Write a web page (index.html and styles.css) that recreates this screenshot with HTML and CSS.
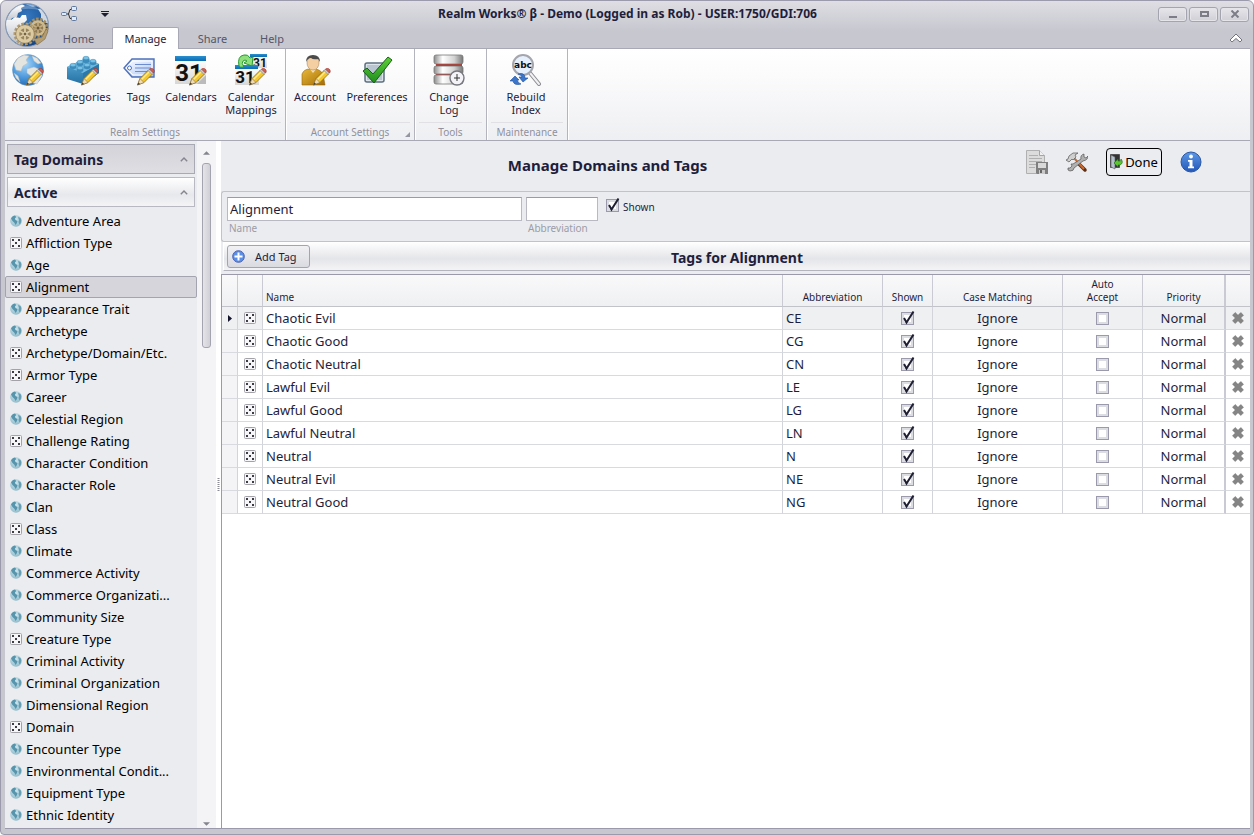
FILE: index.html
```html
<!DOCTYPE html>
<html lang="en">
<head>
    <meta charset="UTF-8">
    <meta name="viewport" content="width=device-width, initial-scale=1.0">
    <title>Realm Works</title>
    <link rel="stylesheet" href="styles.css">
</head>
<body>
    <svg class="sprites" aria-hidden="true">
        <defs>
            <radialGradient id="g-sea" cx="40%" cy="30%" r="75%">
                <stop offset="0" stop-color="#a9d8fa"/>
                <stop offset="0.6" stop-color="#4a97dc"/>
                <stop offset="1" stop-color="#2467ae"/>
            </radialGradient>
            <radialGradient id="g-orb" cx="50%" cy="30%" r="80%">
                <stop offset="0" stop-color="#3577bd"/>
                <stop offset="0.6" stop-color="#1d559b"/>
                <stop offset="1" stop-color="#123a74"/>
            </radialGradient>
            <linearGradient id="g-land" x1="0" y1="0" x2="0" y2="1">
                <stop offset="0" stop-color="#ffffff"/>
                <stop offset="1" stop-color="#b4bac4"/>
            </linearGradient>
            <radialGradient id="g-globe" cx="45%" cy="35%" r="70%">
                <stop offset="0" stop-color="#d4e8ef"/>
                <stop offset="1" stop-color="#8ab8c8"/>
            </radialGradient>
            <linearGradient id="g-brick" x1="0" y1="0" x2="0" y2="1">
                <stop offset="0" stop-color="#5cadd8"/>
                <stop offset="1" stop-color="#2471a4"/>
            </linearGradient>
            <linearGradient id="g-tag" x1="0" y1="0" x2="1" y2="1">
                <stop offset="0" stop-color="#ffffff"/>
                <stop offset="1" stop-color="#a9c4f6"/>
            </linearGradient>
            <linearGradient id="g-cal" x1="0" y1="0" x2="0" y2="1">
                <stop offset="0" stop-color="#2a8fd0"/>
                <stop offset="1" stop-color="#0c6cb0"/>
            </linearGradient>
            <linearGradient id="g-page" x1="0" y1="0" x2="0" y2="1">
                <stop offset="0" stop-color="#ffffff"/>
                <stop offset="1" stop-color="#d6d6d6"/>
            </linearGradient>
            <linearGradient id="g-gold" x1="0" y1="0" x2="1" y2="1">
                <stop offset="0" stop-color="#e8b93c"/>
                <stop offset="1" stop-color="#a56c05"/>
            </linearGradient>
            <linearGradient id="g-green" x1="0" y1="0" x2="0" y2="1">
                <stop offset="0" stop-color="#5fce3a"/>
                <stop offset="1" stop-color="#1f8d1c"/>
            </linearGradient>
            <linearGradient id="g-metal" x1="0" y1="0" x2="1" y2="0">
                <stop offset="0" stop-color="#8c8c8c"/>
                <stop offset="0.3" stop-color="#ffffff"/>
                <stop offset="0.7" stop-color="#d2d2d2"/>
                <stop offset="1" stop-color="#777777"/>
            </linearGradient>
            <linearGradient id="g-info" x1="0" y1="0" x2="0" y2="1">
                <stop offset="0" stop-color="#5d98e6"/>
                <stop offset="1" stop-color="#2257b8"/>
            </linearGradient>
            <clipPath id="orb-clip"><circle cx="22" cy="22" r="21"/></clipPath>
        </defs>

        <symbol id="pencil" viewBox="0 0 18 18">
            <path d="M1 17l2.500-6.500L12 2l4 4-8.500 8.500z" fill="#f3c52f" stroke="#8b6a12" stroke-width="0.800"/>
            <path d="M5 11.500l8-8" stroke="#fdeb8c" stroke-width="1.500"/>
            <path d="M1 17l2.500-6.500 4 4z" fill="#f0dcb4" stroke="#8b7040" stroke-width="0.600"/>
            <path d="M1 17l1-2.500 1.500 1.500z" fill="#333"/>
            <path d="M11.500 2.500l1.500-1.500 4 4L15.500 6.500z" fill="#c9ccd2" stroke="#777" stroke-width="0.500"/>
            <path d="M13 1C14 0 15.500 0 16.800 1.200s1.200 2.800.2 3.800z" fill="#dc5a4b" stroke="#96352b" stroke-width="0.600"/>
        </symbol>
        <symbol id="dice" viewBox="0 0 12 12">
            <rect x="0.500" y="0.500" width="11" height="11" rx="1" fill="#f6f6f8" stroke="#a2a2a8"/>
            <path d="M2 2h2v2H2zM8 2h2v2H8zM5 5h2v2H5zM2 8h2v2H2zM8 8h2v2H8z" fill="#3c3c42"/>
        </symbol>
        <symbol id="globe" viewBox="0 0 12 12">
            <circle cx="6" cy="6" r="5.800" fill="url(#g-globe)"/>
            <path d="M1 3.500C2 1.500 3.500.8 5 .6L6.200 2 5 3.500 5.500 5 7.500 6 7 8 5.500 10 4.500 8 2.500 6z" fill="#5795ac"/>
            <path d="M8 2l2.500 1L11.300 5l-.5 3-1.300 1.500L8.500 7 9 5z" fill="#639eb3"/>
        </symbol>
        <symbol id="cross" viewBox="0 0 12 12">
            <path d="M3.200.5L6 3.300 8.800.5l2.700 2.700L8.700 6l2.800 2.800-2.700 2.700L6 8.700l-2.800 2.800L.5 8.800 3.300 6 .5 3.200z" fill="#858585" stroke="#707070" stroke-width="0.500"/>
        </symbol>
        <symbol id="up" viewBox="0 0 8 5">
            <path d="M.8 4.300L4 1l3.200 3.300" fill="none" stroke="#85858f" stroke-width="1.400"/>
        </symbol>
    </svg>

    <div class="window">
        <header class="titlebar">
            <button class="orb" aria-label="Application menu">
                <svg width="44" height="44" viewBox="0 0 44 44">
                    <circle cx="22" cy="22" r="21.500" fill="url(#g-orb)" stroke="#8d9db5"/>
                    <g clip-path="url(#orb-clip)">
                        <path d="M0 16C3 8 9 3 17 1l3 2-4 2 1 3-4 2-1 4-5 1-3 5-4 2z" fill="url(#g-land)"/>
                        <path d="M0 17l6 0 4-3 5 1 2-3 4 0 1 5-3 3-1 4-5 2-1 8 4 5-1 5H0z" fill="url(#g-land)"/>
                        <path d="M33 6l5-1 5 8 1 8-5-2-3-4 0-4z" fill="#cfd9e6"/>
                        <path d="M20 1l4-1 8 3-4 1z" fill="#8db3dc"/>
                        <path d="M6 9Q20-4 37 8 22 3 6 9z" fill="#fff" opacity="0.250"/>
                    </g>
                    <g fill="none">
                        <circle cx="33" cy="25" r="8.500" stroke="#a38b5e" stroke-width="4" stroke-dasharray="2.400 1.400"/>
                        <circle cx="33" cy="25" r="6.500" fill="#8f7b58" stroke="#d0bb8f" stroke-width="2.500"/>
                        <path d="M33 19v12M27.500 22l11 6M27.500 28l11-6" stroke="#c4ae80" stroke-width="1.600"/>
                        <path d="M29 36l8-2 4-8 2 2-3 8-8 6z" fill="#b39c70" stroke="#7d6a48" stroke-width="0.600"/>
                        <circle cx="20" cy="31" r="9.500" stroke="#b09a6f" stroke-width="4" stroke-dasharray="2.600 1.500"/>
                        <circle cx="20" cy="31" r="7.500" fill="#98855f" stroke="#dccaa2" stroke-width="3.500"/>
                        <path d="M20 24v14M14 27.500l12 7M14 34.500l12-7" stroke="#dccaa2" stroke-width="1.800"/>
                        <circle cx="20" cy="31" r="2" fill="#75623f" stroke="#e8dab8"/>
                        <circle cx="33" cy="25" r="1.500" fill="#6c5937"/>
                        <circle cx="20" cy="31" r="9.300" stroke="#75623f" stroke-width="0.500"/>
                    </g>
                </svg>
            </button>
            <div class="quick">
                <button aria-label="Relationships">
                    <svg width="16" height="16" viewBox="0 0 16 16">
                        <path d="M5 8h3M11 3.500H9L7.500 8 9 12.500h2" fill="none" stroke="#333"/>
                        <g fill="#dfeafa" stroke="#5f789e">
                            <rect x="0.500" y="6.500" width="5" height="3" rx="1"/>
                            <rect x="10.500" y="0.500" width="5" height="4" rx="1"/>
                            <rect x="10.500" y="10.500" width="5" height="4" rx="1"/>
                        </g>
                    </svg>
                </button>
                <button aria-label="Customize toolbar">
                    <svg width="8" height="6" viewBox="0 0 8 6"><path d="M0 0h8v1H0zM0 2h8L4 6z" fill="#1e1e32"/></svg>
                </button>
            </div>
            <h1>Realm Works® β - Demo (Logged in as Rob) - USER:1750/GDI:706</h1>
            <div class="window-buttons">
                <button aria-label="Minimize"><svg width="10" height="8" viewBox="0 0 10 8"><path d="M1 6h8v2H1z" fill="#7d7d88"/></svg></button>
                <button aria-label="Maximize"><svg width="10" height="8" viewBox="0 0 10 8"><rect x="2" y="2" width="7" height="4" fill="none" stroke="#7d7d88" stroke-width="2"/></svg></button>
                <button aria-label="Close"><svg width="10" height="8" viewBox="0 0 10 8"><path d="M1.500.5l7 7M8.500.5l-7 7" stroke="#7d7d88" stroke-width="2"/></svg></button>
            </div>
        </header>

        <nav class="tabs">
            <a href="#">Home</a>
            <a href="#" class="active">Manage</a>
            <a href="#">Share</a>
            <a href="#" class="narrow">Help</a>
            <button class="collapse" aria-label="Collapse ribbon">
                <svg width="14" height="10" viewBox="0 0 14 10"><path d="M1 7l6-6 6 6-2 2-4-3.500L3 9z" fill="#fff" stroke="#74747e"/></svg>
            </button>
        </nav>

        <section class="ribbon">
            <div class="group">
                <div class="tools">
                    <button>
                        <svg width="32" height="32" viewBox="0 0 32 32">
                            <circle cx="16" cy="16" r="15.500" fill="url(#g-sea)" stroke="#6d92b8" stroke-width="0.500"/>
                            <path d="M2 10L6 4l6-3 5 1-3 4 2 3-5 3-2 5-5-1zM20 2l5 2 4 5-3 1-4-3zM15 15l7-2 7 3 1 6-5 8-4-1-2-7-4-3zM2 19l4 3 2 6-4-4z" fill="#e4e4e0" stroke="#b9bcbb" stroke-width="0.500"/>
                            <use href="#pencil" x="13" y="14" width="19" height="18"/>
                        </svg>
                        Realm
                    </button>
                    <button class="wide">
                        <svg width="32" height="32" viewBox="0 0 32 32">
                            <path d="M0 13l19-9 13 6v9L16 30 0 25z" fill="url(#g-brick)"/>
                            <path d="M0 13l19-9 13 6-16 9z" fill="#6fb9df"/>
                            <path d="M16 19l16-9v9L16 30z" fill="#2b78ab"/>
                            <g fill="#79c2e6" stroke="#3a86b5" stroke-width="0.500">
                                <path d="M3 11v3q3 2 6 0v-3zM10 14v3q3 2 6 0v-3zM10 8v3q3 2 6 0V8zM17 11v3q3 2 6 0v-3zM16 4v4q3 2 6 0V4zM23 7v3q3 2 6 0V7z" fill="#3a8cbd"/>
                                <ellipse cx="6" cy="11" rx="3" ry="1.700"/><ellipse cx="13" cy="14" rx="3" ry="1.700"/>
                                <ellipse cx="13" cy="8" rx="3" ry="1.700"/><ellipse cx="20" cy="11" rx="3" ry="1.700"/>
                                <ellipse cx="19" cy="4" rx="3" ry="1.700"/><ellipse cx="26" cy="7" rx="3" ry="1.700"/>
                            </g>
                            <use href="#pencil" x="13" y="14" width="19" height="18"/>
                        </svg>
                        Categories
                    </button>
                    <button>
                        <svg width="32" height="32" viewBox="0 0 32 32">
                            <path d="M1 14l8-9h22v18H9z" fill="url(#g-tag)" stroke="#4d70ba" stroke-width="1.400"/>
                            <path d="M3 14l7-7h19v14H10z" fill="none" stroke="#fff"/>
                            <circle cx="6.500" cy="14" r="2" fill="#fff" stroke="#4d70ba"/>
                            <path d="M12 10.500h16M12 14h16M12 17.500h13" stroke="#6b8cd0" stroke-width="1.200"/>
                            <use href="#pencil" x="13" y="14" width="19" height="18"/>
                        </svg>
                        Tags
                    </button>
                    <button class="mid">
                        <svg width="32" height="32" viewBox="0 0 32 32">
                            <rect x="0" y="5" width="31" height="25" fill="url(#g-page)"/>
                            <rect x="0" y="2" width="31" height="5" fill="url(#g-cal)"/>
                            <text x="14" y="27" text-anchor="middle" class="cal-day">31</text>
                            <path d="M22 30l9-9v9z" fill="#bbb"/>
                            <use href="#pencil" x="13" y="14" width="19" height="18"/>
                        </svg>
                        Calendars
                    </button>
                    <button class="mid">
                        <svg width="32" height="32" viewBox="0 0 32 32">
                            <rect x="15" y="2" width="17" height="12" fill="url(#g-page)"/>
                            <rect x="15" y="0" width="17" height="3" fill="url(#g-cal)"/>
                            <text x="25" y="13" text-anchor="middle" class="cal-day small">31</text>
                            <rect x="0" y="14" width="24" height="17" fill="url(#g-page)"/>
                            <rect x="0" y="11" width="23" height="4" fill="url(#g-cal)"/>
                            <text x="10" y="29" text-anchor="middle" class="cal-day medium">31</text>
                            <path d="M4 12Q2 2 9 1q4-1 6 3l3-1-1 9-8-3 3-2Q10 5 8 7t1 6q-4 1-5-1z" fill="#8fe07c" stroke="#279a30"/>
                            <use href="#pencil" x="13" y="14" width="19" height="18"/>
                        </svg>
                        Calendar Mappings
                    </button>
                </div>
                <div class="caption">Realm Settings</div>
            </div>
            <div class="group">
                <div class="tools">
                    <button class="account">
                        <svg width="32" height="32" viewBox="0 0 32 32">
                            <path d="M3 31V20q2-5 8-5h4q6 0 9 5l2 11z" fill="url(#g-gold)" stroke="#96670d" stroke-width="0.600"/>
                            <path d="M10 14l4 5 4-5z" fill="#f6dfb8"/>
                            <ellipse cx="14" cy="9" rx="6" ry="7" fill="#f3cfa2" stroke="#a3794a" stroke-width="0.500"/>
                            <path d="M7 8Q7 1 14 1t7 7l-2-3q-5 1-7-1-3 0-5 4z" fill="#4b4b4b"/>
                            <use href="#pencil" x="13" y="14" width="19" height="18"/>
                        </svg>
                        Account
                    </button>
                    <button class="wide">
                        <svg width="32" height="32" viewBox="0 0 32 32">
                            <rect x="4" y="9" width="19" height="19" rx="2" fill="#dce3ea" stroke="#5d7082" stroke-width="1.500"/>
                            <rect x="6" y="11" width="15" height="15" fill="#b9c6d2"/>
                            <path d="M2 17l4-3 6 6L27 3l4 3-18 23z" fill="url(#g-green)" stroke="#185e17" stroke-linejoin="round"/>
                        </svg>
                        Preferences
                    </button>
                </div>
                <div class="caption">Account Settings
                    <svg class="launcher" width="5" height="5" viewBox="0 0 5 5"><path d="M5 0v5H0z" fill="#9696a0"/></svg>
                </div>
            </div>
            <div class="group">
                <div class="tools">
                    <button class="mid">
                        <svg width="32" height="32" viewBox="0 0 32 32">
                            <rect x="3" y="8" width="26" height="14" fill="#c6271f"/>
                            <g fill="url(#g-metal)" stroke="#777" stroke-width="0.800">
                                <rect x="1" y="1" width="29" height="9" rx="2"/>
                                <rect x="1" y="12" width="29" height="8" rx="2"/>
                                <rect x="1" y="21" width="29" height="9" rx="2"/>
                            </g>
                            <circle cx="24" cy="24" r="7" fill="#f4f4f8" stroke="#77777f" stroke-width="1.400"/>
                            <path d="M24 20v7M21 24h6" stroke="#333"/>
                        </svg>
                        Change Log
                    </button>
                </div>
                <div class="caption">Tools</div>
            </div>
            <div class="group">
                <div class="tools">
                    <button class="mid">
                        <svg width="32" height="32" viewBox="0 0 32 32">
                            <path d="M20 19l9 11" stroke="#8b8b90" stroke-width="4" stroke-linecap="round"/>
                            <path d="M20 19l9 11" stroke="#f1f1f4" stroke-width="2" stroke-linecap="round"/>
                            <circle cx="13" cy="11" r="10" fill="#e6f0fc" stroke="#a5a5ad" stroke-width="2"/>
                            <text x="13" y="14" text-anchor="middle" class="abc">abc</text>
                            <path d="M0 27l5-5 4 4H7q1 3 4 4-7 2-8-3zM18 24l-5 4-4-5h3q-1-3-4-3 7-2 7 4z" fill="#3b76ca" stroke="#1c4f9e" stroke-width="0.600"/>
                        </svg>
                        Rebuild Index
                    </button>
                </div>
                <div class="caption">Maintenance</div>
            </div>
        </section>

        <div class="content">
            <aside class="sidebar">
                <div class="domains">
                    <button class="section dark">Tag Domains <svg width="8" height="5"><use href="#up"/></svg></button>
                    <button class="section">Active <svg width="8" height="5"><use href="#up"/></svg></button>
                    <ul>
                        <li><a href="#"><svg><use href="#globe"/></svg>Adventure Area</a></li>
                        <li><a href="#"><svg><use href="#dice"/></svg>Affliction Type</a></li>
                        <li><a href="#"><svg><use href="#globe"/></svg>Age</a></li>
                        <li><a href="#" class="selected"><svg><use href="#dice"/></svg>Alignment</a></li>
                        <li><a href="#"><svg><use href="#globe"/></svg>Appearance Trait</a></li>
                        <li><a href="#"><svg><use href="#globe"/></svg>Archetype</a></li>
                        <li><a href="#"><svg><use href="#dice"/></svg>Archetype/Domain/Etc.</a></li>
                        <li><a href="#"><svg><use href="#dice"/></svg>Armor Type</a></li>
                        <li><a href="#"><svg><use href="#globe"/></svg>Career</a></li>
                        <li><a href="#"><svg><use href="#globe"/></svg>Celestial Region</a></li>
                        <li><a href="#"><svg><use href="#dice"/></svg>Challenge Rating</a></li>
                        <li><a href="#"><svg><use href="#globe"/></svg>Character Condition</a></li>
                        <li><a href="#"><svg><use href="#globe"/></svg>Character Role</a></li>
                        <li><a href="#"><svg><use href="#globe"/></svg>Clan</a></li>
                        <li><a href="#"><svg><use href="#dice"/></svg>Class</a></li>
                        <li><a href="#"><svg><use href="#globe"/></svg>Climate</a></li>
                        <li><a href="#"><svg><use href="#globe"/></svg>Commerce Activity</a></li>
                        <li><a href="#"><svg><use href="#globe"/></svg>Commerce Organizati...</a></li>
                        <li><a href="#"><svg><use href="#globe"/></svg>Community Size</a></li>
                        <li><a href="#"><svg><use href="#dice"/></svg>Creature Type</a></li>
                        <li><a href="#"><svg><use href="#globe"/></svg>Criminal Activity</a></li>
                        <li><a href="#"><svg><use href="#globe"/></svg>Criminal Organization</a></li>
                        <li><a href="#"><svg><use href="#globe"/></svg>Dimensional Region</a></li>
                        <li><a href="#"><svg><use href="#dice"/></svg>Domain</a></li>
                        <li><a href="#"><svg><use href="#globe"/></svg>Encounter Type</a></li>
                        <li><a href="#"><svg><use href="#globe"/></svg>Environmental Condit...</a></li>
                        <li><a href="#"><svg><use href="#globe"/></svg>Equipment Type</a></li>
                        <li><a href="#"><svg><use href="#globe"/></svg>Ethnic Identity</a></li>
                    </ul>
                </div>
                <div class="scrollbar">
                    <svg width="7" height="4" viewBox="0 0 8 4"><path d="M0 4l4-4 4 4z" fill="#85858f"/></svg>
                    <div class="thumb"></div>
                    <svg width="7" height="4" viewBox="0 0 8 4"><path d="M0 0l4 4 4-4z" fill="#85858f"/></svg>
                </div>
            </aside>
            <div class="splitter"><svg width="3" height="14" viewBox="0 0 3 14"><path d="M1.500 0v14" stroke="#8c8c96" stroke-dasharray="1 1" stroke-width="2"/></svg></div>

            <main>
                <div class="page-head">
                    <h2>Manage Domains and Tags</h2>
                    <div class="actions">
                        <button aria-label="Save">
                            <svg width="22" height="24" viewBox="0 0 22 24">
                                <path d="M.5.5h13l5 5v18H.5z" fill="#dcdcdc" stroke="#b0b0b0"/>
                                <path d="M13.500.5v5h5" fill="#f1f1f1" stroke="#a5a5a5"/>
                                <path d="M3 5.500h9M3 8.500h13M3 11.500h13M3 14.500h7M3 17.500h6" stroke="#b0b0b0"/>
                                <path d="M10 12h12v12H11l-1-1z" fill="#7f7f7f"/>
                                <path d="M12 13h8v5h-8z" fill="#d9d9d9"/><path d="M13 20h6v4h-6z" fill="#c9c9c9"/><path d="M14 20h2v3h-2z" fill="#666"/>
                            </svg>
                        </button>
                        <button aria-label="Tools">
                            <svg width="22" height="22" viewBox="0 0 22 22">
                                <path d="M12 12l7 7" stroke="#5f2d14" stroke-width="3.500" stroke-linecap="round"/>
                                <path d="M8 7l10 11" stroke="#c96a30" stroke-width="2"/>
                                <path d="M4 20l-2-1 0-2 2 0 2-2-1-2 2 0L15 8q-1-4 3-5l0 3 2 1 2-2q0 4-5 5L8 17q0 3-4 3z" fill="#b0b0b0" stroke="#555" stroke-width="0.700"/>
                                <path d="M0 9l2-1 1-3 4-3 5 0-3 2 1 2-3 3-1-1-3 3z" fill="#cfcfcf" stroke="#555" stroke-width="0.700"/>
                            </svg>
                        </button>
                        <button class="done">
                            <svg width="13" height="16" viewBox="0 0 13 16">
                                <path d="M.5.500h9v13h-9z" fill="#333" stroke="#555"/>
                                <path d="M1 1l4 2v12l-4-2z" fill="#b3c0cc" stroke="#555" stroke-width="0.600"/>
                                <path d="M4 9l4-4v2h2q1 0 1-2 3 4-1 6H8v2z" fill="#5cc52f" stroke="#227711" stroke-width="0.700"/>
                            </svg>
                            Done
                        </button>
                        <button aria-label="Information">
                            <svg width="22" height="22" viewBox="0 0 22 22">
                                <circle cx="11" cy="11" r="10" fill="url(#g-info)" stroke="#2a57a5"/>
                                <circle cx="11" cy="5.500" r="1.900" fill="#fff"/>
                                <path d="M8 9h4.500v6.500H14v1.800H8v-1.800h1.500v-4.700H8z" fill="#fff"/>
                            </svg>
                        </button>
                    </div>
                </div>

                <form class="fields">
                    <div class="field">
                        <input type="text" id="name" value="Alignment">
                        <label for="name">Name</label>
                    </div>
                    <div class="field abbr">
                        <input type="text" id="abbr">
                        <label for="abbr">Abbreviation</label>
                    </div>
                    <label class="shown"><input type="checkbox" checked>Shown</label>
                </form>

                <div class="bar">
                    <button class="add">
                        <svg width="13" height="13" viewBox="0 0 13 13">
                            <circle cx="6.500" cy="6.500" r="5.800" fill="#5c8fe8" stroke="#4a5fae"/>
                            <path d="M5.500 2.500h2v3h3v2h-3v3h-2v-3h-3v-2h3z" fill="#fff"/>
                        </svg>
                        Add Tag
                    </button>
                    <h3>Tags for Alignment</h3>
                </div>

                <div class="grid">
                    <table>
                        <colgroup>
                            <col class="c-mark"><col class="c-icon"><col><col class="c-abbr"><col class="c-shown"><col class="c-case"><col class="c-auto"><col class="c-prio"><col class="c-del">
                        </colgroup>
                        <thead>
                            <tr><th></th><th></th><th class="left">Name</th><th>Abbreviation</th><th>Shown</th><th>Case Matching</th><th>Auto<br>Accept</th><th>Priority</th><th></th></tr>
                        </thead>
                        <tbody>
                            <tr class="current">
                                <td><svg class="marker" width="4" height="7" viewBox="0 0 4 7"><path d="M0 0l4 3.500L0 7z" fill="#14142a"/></svg></td>
                                <td><svg><use href="#dice"/></svg></td>
                                <td class="left">Chaotic Evil</td><td class="left">CE</td>
                                <td><input type="checkbox" aria-label="Shown" checked></td><td>Ignore</td>
                                <td><input type="checkbox" aria-label="Auto accept"></td><td>Normal</td>
                                <td><button aria-label="Delete"><svg><use href="#cross"/></svg></button></td>
                            </tr>
                            <tr>
                                <td></td>
                                <td><svg><use href="#dice"/></svg></td>
                                <td class="left">Chaotic Good</td><td class="left">CG</td>
                                <td><input type="checkbox" aria-label="Shown" checked></td><td>Ignore</td>
                                <td><input type="checkbox" aria-label="Auto accept"></td><td>Normal</td>
                                <td><button aria-label="Delete"><svg><use href="#cross"/></svg></button></td>
                            </tr>
                            <tr>
                                <td></td>
                                <td><svg><use href="#dice"/></svg></td>
                                <td class="left">Chaotic Neutral</td><td class="left">CN</td>
                                <td><input type="checkbox" aria-label="Shown" checked></td><td>Ignore</td>
                                <td><input type="checkbox" aria-label="Auto accept"></td><td>Normal</td>
                                <td><button aria-label="Delete"><svg><use href="#cross"/></svg></button></td>
                            </tr>
                            <tr>
                                <td></td>
                                <td><svg><use href="#dice"/></svg></td>
                                <td class="left">Lawful Evil</td><td class="left">LE</td>
                                <td><input type="checkbox" aria-label="Shown" checked></td><td>Ignore</td>
                                <td><input type="checkbox" aria-label="Auto accept"></td><td>Normal</td>
                                <td><button aria-label="Delete"><svg><use href="#cross"/></svg></button></td>
                            </tr>
                            <tr>
                                <td></td>
                                <td><svg><use href="#dice"/></svg></td>
                                <td class="left">Lawful Good</td><td class="left">LG</td>
                                <td><input type="checkbox" aria-label="Shown" checked></td><td>Ignore</td>
                                <td><input type="checkbox" aria-label="Auto accept"></td><td>Normal</td>
                                <td><button aria-label="Delete"><svg><use href="#cross"/></svg></button></td>
                            </tr>
                            <tr>
                                <td></td>
                                <td><svg><use href="#dice"/></svg></td>
                                <td class="left">Lawful Neutral</td><td class="left">LN</td>
                                <td><input type="checkbox" aria-label="Shown" checked></td><td>Ignore</td>
                                <td><input type="checkbox" aria-label="Auto accept"></td><td>Normal</td>
                                <td><button aria-label="Delete"><svg><use href="#cross"/></svg></button></td>
                            </tr>
                            <tr>
                                <td></td>
                                <td><svg><use href="#dice"/></svg></td>
                                <td class="left">Neutral</td><td class="left">N</td>
                                <td><input type="checkbox" aria-label="Shown" checked></td><td>Ignore</td>
                                <td><input type="checkbox" aria-label="Auto accept"></td><td>Normal</td>
                                <td><button aria-label="Delete"><svg><use href="#cross"/></svg></button></td>
                            </tr>
                            <tr>
                                <td></td>
                                <td><svg><use href="#dice"/></svg></td>
                                <td class="left">Neutral Evil</td><td class="left">NE</td>
                                <td><input type="checkbox" aria-label="Shown" checked></td><td>Ignore</td>
                                <td><input type="checkbox" aria-label="Auto accept"></td><td>Normal</td>
                                <td><button aria-label="Delete"><svg><use href="#cross"/></svg></button></td>
                            </tr>
                            <tr>
                                <td></td>
                                <td><svg><use href="#dice"/></svg></td>
                                <td class="left">Neutral Good</td><td class="left">NG</td>
                                <td><input type="checkbox" aria-label="Shown" checked></td><td>Ignore</td>
                                <td><input type="checkbox" aria-label="Auto accept"></td><td>Normal</td>
                                <td><button aria-label="Delete"><svg><use href="#cross"/></svg></button></td>
                            </tr>
                        </tbody>
                    </table>
                </div>
            </main>
        </div>
    </div>
</body>
</html>
```
FILE: styles.css
```css
* {
    box-sizing: border-box;
}
body {
    margin: 0;
    font-family: "Noto Sans", sans-serif;
    font-size: 11px;
    color: #1e1e3c;
}
button {
    margin: 0;
    padding: 0;
    border: none;
    background: none;
    font: inherit;
    color: inherit;
}
a {
    color: inherit;
    text-decoration: none;
}
h1, h2, h3, ul {
    margin: 0;
    padding: 0;
}
svg {
    display: block;
    flex: none;
}
.sprites {
    position: absolute;
    width: 0;
    height: 0;
}

/* window frame */
.window {
    display: flex;
    flex-direction: column;
    height: 100vh;
    padding: 0 3px 5px 4px;
    border: 1px solid #9a9aac;
    border-radius: 6px 6px 4px 4px;
    background: linear-gradient(#dedee3, #c7c7d0 30px);
}
.titlebar {
    position: relative;
    display: grid;
    grid-template-columns: 1fr auto 1fr;
    align-items: center;
    height: 26px;
}
.orb {
    position: absolute;
    left: 0;
    top: 2px;
    z-index: 2;
}
.quick {
    display: flex;
    align-items: center;
    gap: 24px;
    padding-left: 56px;
}
h1 {
    font-size: 12px;
    line-height: 16px;
}
.window-buttons {
    display: flex;
    justify-content: flex-end;
    gap: 2px;
    padding-right: 1px;
}
.window-buttons button {
    display: flex;
    align-items: center;
    justify-content: center;
    width: 29px;
    height: 15px;
    border: 1px solid #a4a4b0;
    border-radius: 3px;
    background: linear-gradient(#e6e6ea, #cfcfd6);
    box-shadow: inset 0 0 0 1px #e4e4e9;
}

/* tabs */
.tabs {
    display: flex;
    height: 21px;
    padding-left: 40px;
    color: #55556a;
}
.tabs a {
    width: 67px;
    line-height: 24px;
    text-align: center;
}
.tabs .active {
    margin-bottom: -1px;
    border: 1px solid #a9a9b6;
    border-bottom: none;
    border-radius: 2px 2px 0 0;
    background: #fff;
    color: #1e1e3c;
    line-height: 22px;
    z-index: 1;
}
.tabs .narrow {
    width: 52px;
}
.collapse {
    margin-left: auto;
    padding-right: 7px;
}

/* ribbon */
.ribbon {
    display: flex;
    flex: none;
    height: 93px;
    border-top: 1px solid #a9a9b6;
    border-bottom: 1px solid #a9a9b6;
    background: linear-gradient(#fff, #fbfbfc 30%, #eeeff2);
}
.group {
    display: flex;
    flex-direction: column;
    border-right: 1px solid #b4b4bf;
    box-shadow: 1px 0 #fff;
}
.tools {
    display: flex;
    flex: 1;
    align-items: flex-start;
    padding: 5px 4px 0 0;
}
.tools button {
    display: flex;
    flex-direction: column;
    align-items: center;
    gap: 4px;
    width: 45px;
    line-height: 13px;
}
.tools .mid {
    width: 60px;
}
.tools .wide {
    width: 66px;
}
.tools .account {
    width: 58px;
}
.group:nth-child(3) .tools {
    padding: 5px 7px 0 4px;
}
.group:nth-child(4) .tools {
    padding: 5px 11px 0 9px;
}
.caption {
    position: relative;
    height: 18px;
    margin: 0 4px;
    border-top: 1px solid #e0e0e5;
    font-size: 10px;
    line-height: 18px;
    text-align: center;
    color: #90909e;
}
.launcher {
    position: absolute;
    right: 0;
    bottom: 3px;
}
.cal-day {
    font: bold 24px Roboto, sans-serif;
    fill: #111;
}
.medium {
    font-size: 17px;
}
.small {
    font-size: 12px;
}
.abc {
    font: bold 9px "DejaVu Sans", sans-serif;
    fill: #111;
}

/* sidebar */
.content {
    display: flex;
    flex: 1;
    min-height: 0;
    border-bottom: 1px solid #9a9aac;
    background: #ebecef;
}
.sidebar {
    display: flex;
    flex: none;
    width: 211px;
}
.domains {
    flex: 1;
    min-width: 0;
    padding-top: 3px;
    overflow: hidden;
}
.section {
    display: flex;
    align-items: center;
    justify-content: space-between;
    width: 188px;
    height: 30px;
    margin: 0 0 3px 2px;
    padding: 0 6px;
    border: 1px solid #b9b9c3;
    background: linear-gradient(#fff, #e7e8ec 60%, #f4f4f6);
    font-size: 14px;
    font-weight: bold;
}
.section.dark {
    border-color: #a9a9b6;
    background: linear-gradient(#d3d3d9, #dedee3);
}
ul {
    list-style: none;
}
li a {
    display: flex;
    align-items: center;
    gap: 4px;
    height: 22px;
    padding-left: 5px;
    font-size: 13px;
    color: #000;
    white-space: nowrap;
}
li svg, td svg {
    width: 12px;
    height: 12px;
}
li .selected {
    padding-left: 4px;
    border: 1px solid #a4a4b0;
    border-radius: 2px;
    background: #d5d5db;
}
.scrollbar {
    display: flex;
    flex-direction: column;
    align-items: center;
    width: 19px;
    padding: 10px 0 2px;
    background: #f4f4f6;
}
.thumb {
    width: 9px;
    height: 185px;
    margin: 8px 0 auto;
    border: 1px solid #a4a4b0;
    border-radius: 3px;
    background: linear-gradient(90deg, #e4e4e8, #cfcfd6);
}
.splitter {
    display: flex;
    flex: none;
    align-items: center;
    justify-content: center;
    width: 5px;
    background: #fff;
}

/* main area */
main {
    display: flex;
    flex: 1;
    flex-direction: column;
    min-width: 0;
}
.page-head {
    display: flex;
    flex: none;
    align-items: center;
    height: 50px;
    padding-right: 48px;
}
h2 {
    flex: 1;
    padding: 0 32px 2px 0;
    font-size: 15px;
    text-align: center;
}
.actions {
    display: flex;
    align-items: center;
    gap: 18px;
    padding-bottom: 8px;
}
.done {
    display: flex;
    align-items: center;
    justify-content: center;
    gap: 2px;
    width: 56px;
    height: 28px;
    border: 1px solid #000;
    border-radius: 4px;
    font-size: 13px;
    color: #000;
}
.fields {
    display: flex;
    flex: none;
    gap: 4px;
    height: 51px;
    padding: 5px 4px 0 5px;
    border: 1px solid #c2c2cb;
    border-right: none;
    border-radius: 3px 0 0 3px;
}
.field {
    width: 295px;
}
.field.abbr {
    width: 72px;
}
.field input {
    display: block;
    width: 100%;
    height: 24px;
    padding: 0 2px;
    border: 1px solid #b9b9c3;
    border-top-color: #9a9aac;
    background: #fff;
    font: 13px "Noto Sans", sans-serif;
    color: #1e1e3c;
}
.field label {
    display: block;
    padding-left: 2px;
    font-size: 10px;
    line-height: 15px;
    color: #9c9ca8;
}
.shown {
    display: flex;
    gap: 3px;
    height: 16px;
    padding-left: 4px;
    font-size: 10px;
    line-height: 20px;
}
input[type="checkbox"] {
    appearance: none;
    display: block;
    width: 14px;
    height: 16px;
    margin: 0;
    background: url("data:image/svg+xml,%3Csvg xmlns='http://www.w3.org/2000/svg' width='14' height='16'%3E%3Crect x='.5' y='2.5' width='12' height='12' fill='%23dcdde2' stroke='%239a9aac'/%3E%3Crect x='3' y='5' width='7' height='7' fill='%23fff'/%3E%3C/svg%3E") no-repeat;
}
input[type="checkbox"]:checked {
    background-image: url("data:image/svg+xml,%3Csvg xmlns='http://www.w3.org/2000/svg' width='14' height='16'%3E%3Crect x='.5' y='2.5' width='12' height='12' fill='%23dcdde2' stroke='%239a9aac'/%3E%3Crect x='3' y='5' width='7' height='7' fill='%23fff'/%3E%3Cpath d='M3 8L5.500 12.500L12.500 1.500' fill='none' stroke='%231e1e32' stroke-width='2'/%3E%3C/svg%3E");
}
.bar {
    display: flex;
    flex: none;
    align-items: center;
    height: 29px;
    margin: 0 0 3px 2px;
    padding-left: 3px;
    border-left: 1px solid #fff;
    border-bottom: 1px solid #b4b4bf;
    background: linear-gradient(#fff, #e4e5e9 60%, #f4f4f6);
}
.add {
    display: flex;
    align-items: center;
    gap: 10px;
    width: 83px;
    height: 23px;
    padding-left: 4px;
    border: 1px solid #a4a4b0;
    border-radius: 3px;
    background: linear-gradient(#f1f1f4, #dadbe1);
}
h3 {
    flex: 1;
    padding: 2px 86px 0 0;
    font-size: 14px;
    text-align: center;
}
.grid {
    flex: 1;
    border-top: 1px solid #9a9aac;
    border-left: 1px solid #9a9aac;
    background: #fff;
}
table {
    width: 100%;
    table-layout: fixed;
    border-collapse: separate;
    border-spacing: 0;
}
.c-mark {
    width: 16px;
}
.c-icon {
    width: 25px;
}
.c-del {
    width: 24px;
}
.c-abbr {
    width: 100px;
}
.c-shown {
    width: 50px;
}
.c-case {
    width: 130px;
}
.c-auto {
    width: 80px;
}
.c-prio {
    width: 83px;
}
th {
    height: 32px;
    padding: 0 2px 2px;
    border-right: 1px solid #c9cad4;
    border-bottom: 1px solid #c2c2cb;
    background: linear-gradient(#f9f9fa, #eff0f2);
    font-size: 10px;
    font-weight: normal;
    line-height: 13px;
    vertical-align: bottom;
}
td {
    height: 23px;
    padding: 0;
    border-right: 1px solid #d2d3db;
    border-bottom: 1px solid #d9dae0;
    font-size: 13px;
    line-height: 22px;
    text-align: center;
}
.left {
    padding-left: 3px;
    text-align: left;
}
td svg, td button, td input[type="checkbox"] {
    margin: 0 auto;
}
td button {
    display: block;
}
td .marker {
    width: 4px;
    height: 7px;
}
th:nth-child(8), td:nth-child(8) {
    border-right: 2px solid #c9cad4;
}
th:last-child, td:last-child {
    border-right: none;
}
td:first-child {
    background: #f4f4f6;
}
.current td {
    background: #eff0f2;
}
.current td:nth-child(3) {
    background: #fff;
}
```
